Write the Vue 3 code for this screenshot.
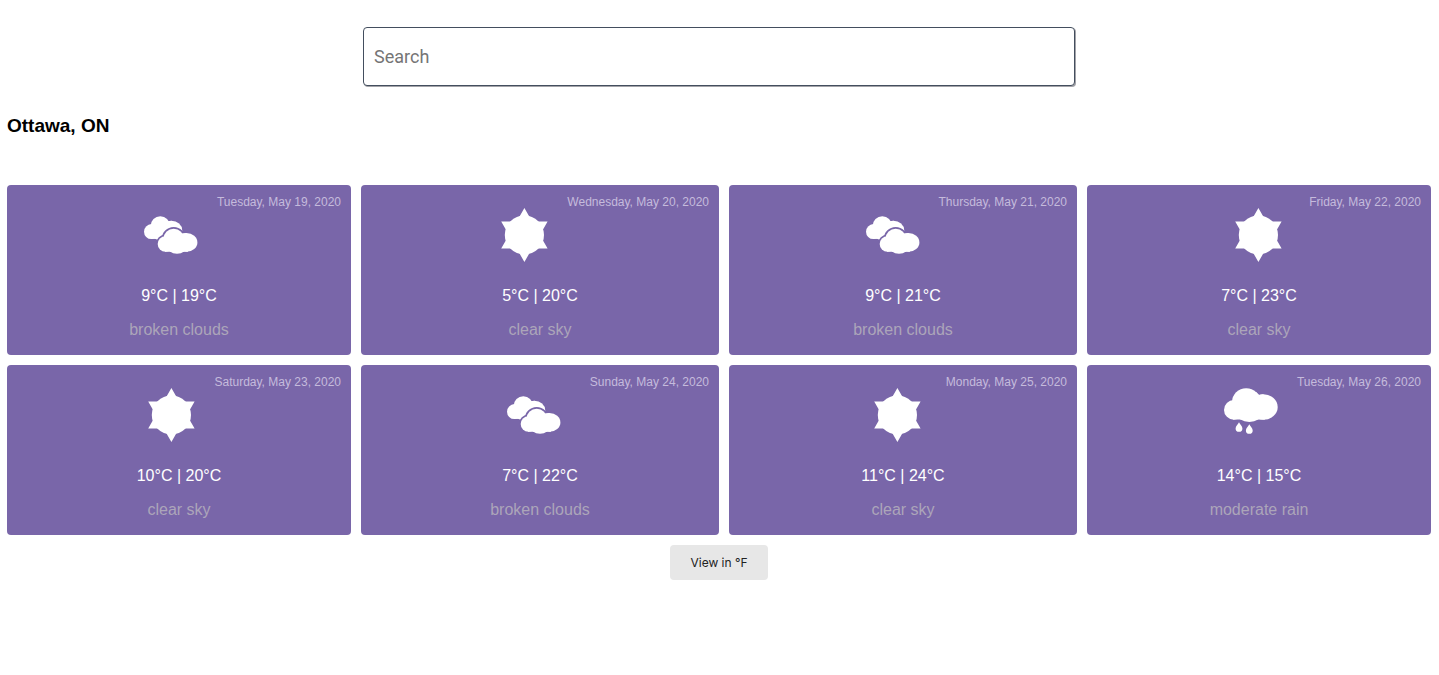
<script setup>
import { ref } from 'vue'

const query = ref('')
const days = [
  { date: 'Tuesday, May 19, 2020', low: 9, high: 19, sky: 'broken clouds', icon: 'clouds' },
  { date: 'Wednesday, May 20, 2020', low: 5, high: 20, sky: 'clear sky', icon: 'sun' },
  { date: 'Thursday, May 21, 2020', low: 9, high: 21, sky: 'broken clouds', icon: 'clouds' },
  { date: 'Friday, May 22, 2020', low: 7, high: 23, sky: 'clear sky', icon: 'sun' },
  { date: 'Saturday, May 23, 2020', low: 10, high: 20, sky: 'clear sky', icon: 'sun' },
  { date: 'Sunday, May 24, 2020', low: 7, high: 22, sky: 'broken clouds', icon: 'clouds' },
  { date: 'Monday, May 25, 2020', low: 11, high: 24, sky: 'clear sky', icon: 'sun' },
  { date: 'Tuesday, May 26, 2020', low: 14, high: 15, sky: 'moderate rain', icon: 'rain' },
]
</script>

<template>
  <main class="page">
    <input v-model="query" class="search" type="text" placeholder="Search" aria-label="Search" />
    <h3 class="city">Ottawa, ON</h3>
    <section class="days">
      <article v-for="day in days" :key="day.date" class="card">
        <div class="top">
          <svg class="icon" viewBox="0 0 60 54" aria-hidden="true">
            <g v-if="day.icon === 'sun'">
              <circle cx="29.4" cy="27" r="19.6" />
              <path d="M29.4 0 52.6 40.5H6.2ZM29.4 54 6.2 13.5H52.6Z" />
            </g>
            <g v-else-if="day.icon === 'clouds'">
              <circle cx="8.4" cy="23.7" r="7.4" />
              <circle cx="17.3" cy="17.8" r="9.6" />
              <ellipse cx="28.4" cy="22.2" rx="10.8" ry="9.5" />
              <path d="M8 20H24V30L14.5 31.7Q12 30.4 8 31.1ZM20 12 25.4 13.3 28.4 12.7V20H20ZM6 17 8.4 16.2 12 12V20H6Z" />
              <g class="gap">
                <circle cx="22.5" cy="36" r="7.8" />
                <circle cx="30.7" cy="31" r="10.3" />
                <ellipse cx="43.5" cy="34.4" rx="10.9" ry="9.4" />
              </g>
              <circle cx="22.5" cy="36" r="7.8" />
              <circle cx="30.7" cy="31" r="10.3" />
              <ellipse cx="43.5" cy="34.4" rx="10.9" ry="9.4" />
              <ellipse cx="34" cy="38" rx="10" ry="7.7" />
              <path d="M22 34H45V43.7H22ZM35 25 39.2 25.5 43.5 25V34H35Z" />
            </g>
            <g v-else>
              <circle cx="10.8" cy="21.9" r="9.8" />
              <ellipse cx="23.2" cy="14.2" rx="14.2" ry="14" />
              <ellipse cx="40.4" cy="19" rx="14.3" ry="12.7" />
              <ellipse cx="26.3" cy="25.5" rx="12.5" ry="8.5" />
              <path d="M10 18H42V31.5H10ZM33 4 36.3 7 40.4 6.3V18H33Z" />
              <path d="M16 34.2C16.9 36.4 19.4 38 19.4 40.4A3.4 3.4 0 0 1 12.6 40.4C12.6 38 15.1 36.4 16 34.2Z" />
              <path d="M26.3 36.2C27.2 38.4 29.7 40 29.7 42.4A3.4 3.4 0 0 1 22.9 42.4C22.9 40 25.4 38.4 26.3 36.2Z" />
            </g>
          </svg>
          <time class="date">{{ day.date }}</time>
        </div>
        <p class="temp">{{ day.low }}°C | {{ day.high }}°C</p>
        <p class="sky">{{ day.sky }}</p>
      </article>
    </section>
    <button class="unit" type="button">View in °F</button>
  </main>
</template>

<style>
body {
  margin: 0;
  background: #fff;
}
</style>

<style scoped>
.page {
  display: flex;
  flex-direction: column;
  align-items: center;
  padding: 27px 8px 0 7px;
  font-family: "Liberation Sans", Arial, sans-serif;
  color: #000;
}
.search {
  box-sizing: border-box;
  width: 50%;
  height: 59px;
  padding: 0 10px;
  border: 1px solid #434e5e;
  border-radius: 4px;
  box-shadow: 1px 1px 0 #a3a3a8;
  background: #fff;
  font-family: Roboto, sans-serif;
  font-size: 18px;
}
.search::placeholder {
  color: #757575;
}
.city {
  align-self: flex-start;
  margin: 29px 0 48px;
  font-size: 19px;
  line-height: 22px;
}
.days {
  display: grid;
  grid-template-columns: 344fr 358fr 348fr 344fr;
  gap: 10px;
  width: 100%;
}
.card {
  padding: 10px 10px 16px;
  border-radius: 4px;
  background: #7966a9;
  text-align: center;
}
/* The left column balances a short date so that icons sit near the card's middle. */
.top {
  display: grid;
  grid-template-columns: 112px 1fr auto;
  align-items: start;
}
.icon {
  grid-column: 2;
  justify-self: center;
  width: 60px;
  height: 54px;
  margin-top: 13px;
  fill: #fff;
}
.gap {
  fill: #7966a9;
  stroke: #7966a9;
  stroke-width: 3.4;
}
.date {
  color: #c5bbdc;
  font-size: 12px;
  line-height: 14px;
}
.temp,
.sky {
  margin: 0;
  font-size: 16px;
  line-height: 18px;
}
.temp {
  margin-top: 25px;
  color: #fff;
}
.sky {
  margin-top: 16px;
  color: #aca5b9;
}
.unit {
  margin-top: 10px;
  height: 35px;
  padding: 0 20px;
  border: 0;
  border-radius: 4px;
  background: #e7e7e7;
  color: #222;
  font-family: Inter, sans-serif;
  font-size: 12px;
}
</style>
